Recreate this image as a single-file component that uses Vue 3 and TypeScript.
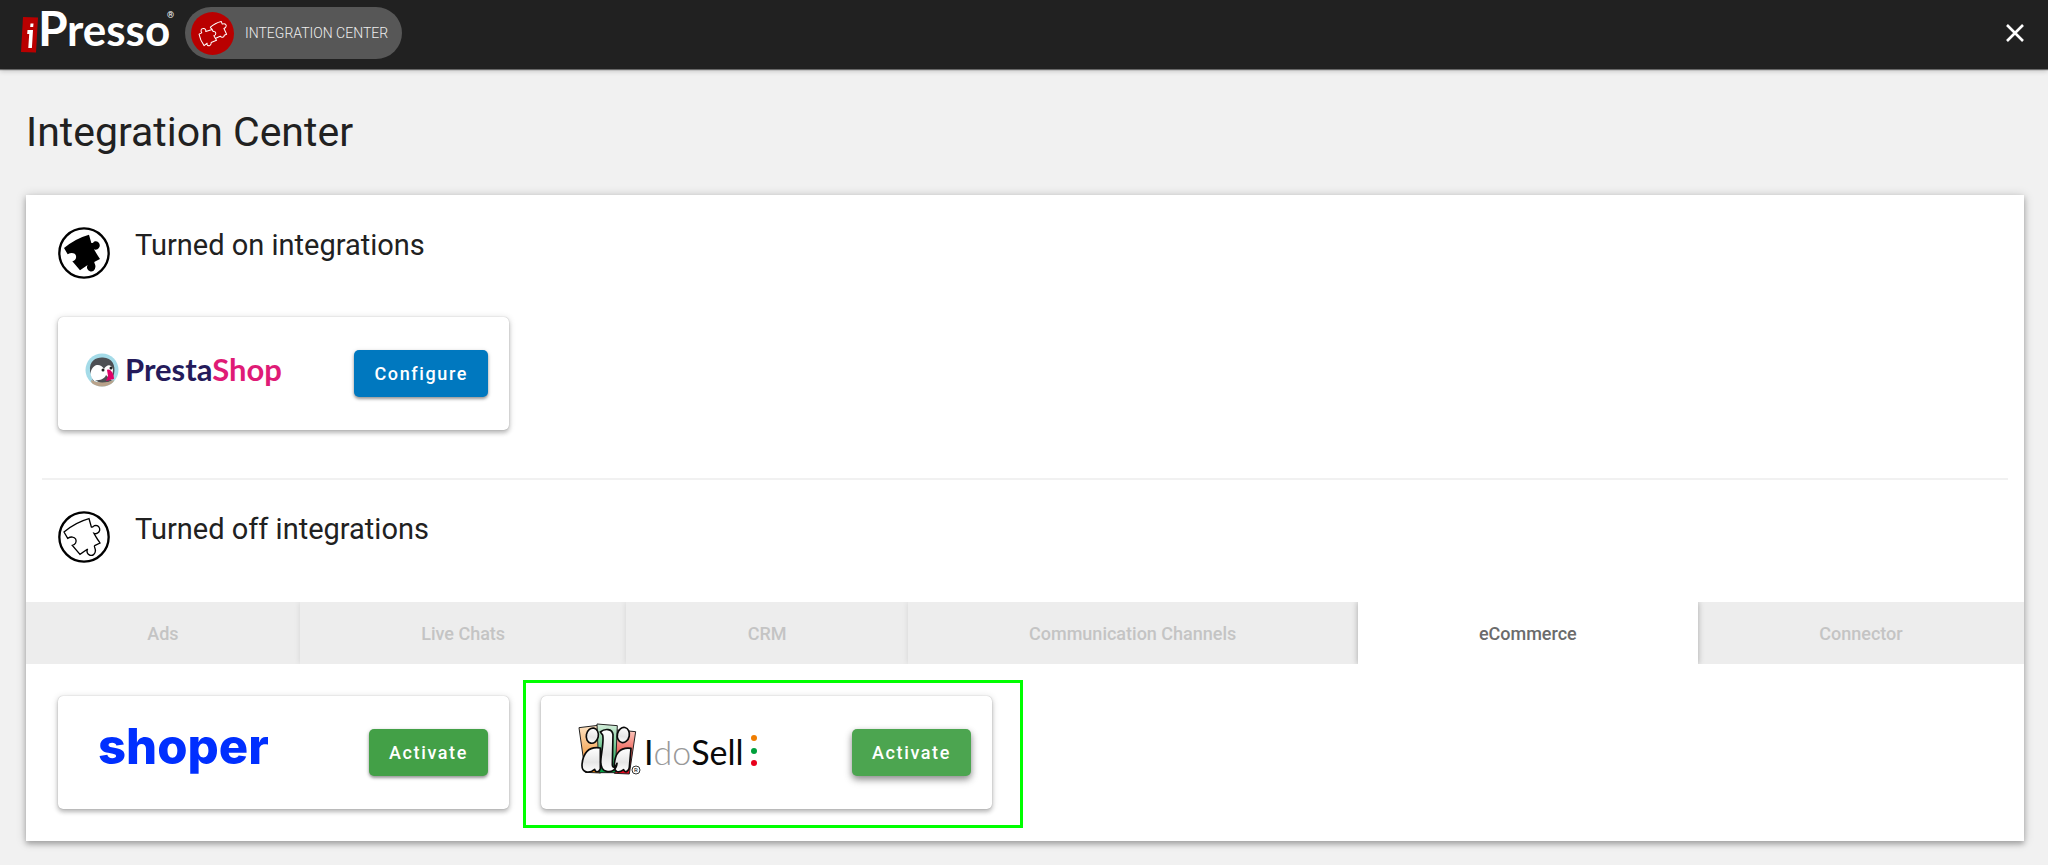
<script setup lang="ts">
import { ref } from 'vue'

const puzzle =
  'M42 97 Q77 68 117 57 L124 82 C132 84 128 77 138 77 A12.5 12.5 0 1 1 132 101 C137 111 144 121 150 130 L134 138 C130 140 138 146 136 155 A12.5 12.5 0 1 1 113 148 L90 164 L67 137 C76 135 81 127 77 118 C73 111 63 110 53 116 Z'

const tabs: string[] = ['Ads', 'Live Chats', 'CRM', 'Communication Channels', 'eCommerce', 'Connector']
const activeTab = ref('eCommerce')
</script>

<template>
  <div class="page">
    <header class="topbar">
      <a class="brand" href="#" aria-label="iPresso">
        <svg width="160" height="66" viewBox="0 0 160 66">
          <path d="M2 17 L17 17.500 L15 52.500 L0 52 Z" fill="#b90000" />
          <path d="M9.500 23.500 h3 l-.3 3.500 h-3 Z M6.500 30 h5.500 l-1.100 18 h-3.600 l.9 -14 h-2 Z" fill="#fff" />
          <text x="17" y="46" class="brand-p">P</text>
          <text x="46" y="46" class="brand-rest">resso</text>
          <text x="146" y="18" class="brand-mark">®</text>
        </svg>
      </a>
      <a class="pill" href="#">
        <svg class="pill-icon" width="43" height="43" viewBox="574 34 128 128">
          <circle cx="638" cy="98" r="64" fill="#b90000" />
          <g fill="none" stroke="#fff" stroke-width="3" stroke-linejoin="round">
            <path d="M598 100 L606 96 C602 90 604 83 610 83 C616 82 619 87 618 92 L637 86 L640 92 C650 90 650 103 642 105 L650 118 L634 125 C635 132 628 137 623 133 C621 131 621 129 622 127 L613 134 Q601 118 598 100 Z" />
            <path d="M631 80 Q646 66 664 62 L667 70 C676 66 682 73 677 80 L672 83 L680 100 L673 103 C673 110 665 111 661 106 L646 113 M631 80 L637 86" />
          </g>
        </svg>
        <span>INTEGRATION CENTER</span>
      </a>
      <button class="close" type="button" aria-label="Close">
        <svg width="20" height="20" viewBox="0 0 20 20">
          <path d="M2 2 L18 18 M18 2 L2 18" stroke="#fff" stroke-width="2.600" />
        </svg>
      </button>
    </header>

    <main class="content">
      <h1>Integration Center</h1>

      <div class="panel">
        <section class="group">
          <div class="group-head">
            <svg width="52" height="52" viewBox="24 34 156 156">
              <circle cx="102" cy="112" r="74" fill="#fff" stroke="#000" stroke-width="7" />
              <path :d="puzzle" fill="#000" />
            </svg>
            <h2>Turned on integrations</h2>
          </div>
          <div class="cards">
            <article class="card">
              <svg class="logo" width="240" height="64" viewBox="0 0 240 64" role="img" aria-label="PrestaShop">
                <defs>
                  <clipPath id="badge"><circle cx="28" cy="28" r="16.500" /></clipPath>
                </defs>
                <g transform="translate(0 4)">
                  <g clip-path="url(#badge)">
                    <rect x="11" y="11" width="34" height="34" fill="#a4dbe8" />
                    <path d="M16 29 C15 18 23 15 29 15.500 C38 16 42 23 40 32 L37 39 H19 Z" fill="#4d4f53" />
                    <path d="M17 29 C20 21 27 22 30 27 C33 22 37 22 39 27 L38 38 L30 41 L20 39 C17 36 16 32 17 29 Z" fill="#fff" />
                    <path d="M21 38 C27 39 31 36 32 33 L38 39 L28 42 Z" fill="#4d4f53" />
                    <path d="M33 28 C36 26 40 31 40 37 L32 39 L34 34 Z" fill="#df0067" />
                    <circle cx="29" cy="28" r="1.500" fill="#222" />
                    <circle cx="37" cy="26" r="1.500" fill="#222" />
                    <path d="M17 38 Q28 43 40 38 L38 45 H18 Z" fill="#b9a28a" />
                  </g>
                </g>
                <text x="51" y="43" class="presta"><tspan fill="#251b5b">Presta</tspan><tspan fill="#df1b76">Shop</tspan></text>
              </svg>
              <button class="btn configure" type="button">Configure</button>
            </article>
          </div>
        </section>

        <hr />

        <section class="group off">
          <div class="group-head">
            <svg width="52" height="52" viewBox="24 34 156 156">
              <circle cx="102" cy="112" r="74" fill="#fff" stroke="#000" stroke-width="7" />
              <path :d="puzzle" fill="none" stroke="#000" stroke-width="4" />
            </svg>
            <h2>Turned off integrations</h2>
          </div>
        </section>

        <div class="tabs" role="tablist">
          <button
            v-for="tab in tabs"
            :key="tab"
            type="button"
            role="tab"
            :class="['tab', { active: tab === activeTab }]"
            :aria-selected="tab === activeTab"
            @click="activeTab = tab"
          >
            {{ tab }}
          </button>
        </div>

        <div class="cards shop-cards">
          <article class="card">
            <svg class="logo" width="240" height="64" viewBox="0 0 240 64" role="img" aria-label="shoper">
              <text x="24" y="47" class="shoper">shoper</text>
            </svg>
            <button class="btn activate" type="button">Activate</button>
          </article>
          <article class="card marked">
            <svg class="logo" width="240" height="64" viewBox="0 0 240 64" role="img" aria-label="IdoSell">
              <defs>
                <linearGradient id="orange" x2="0" y2="1"><stop stop-color="#fde3c4" /><stop offset=".6" stop-color="#f6a95a" /><stop offset="1" stop-color="#ee7f00" /></linearGradient>
                <linearGradient id="green" x2="0" y2="1"><stop stop-color="#d5eedb" /><stop offset="1" stop-color="#009a3e" /></linearGradient>
                <linearGradient id="red" x2="0" y2="1"><stop stop-color="#fbc9bf" /><stop offset=".5" stop-color="#f0645a" /><stop offset="1" stop-color="#e2001a" /></linearGradient>
                <linearGradient id="silver" x2="0" y2="1"><stop stop-color="#fff" /><stop offset=".6" stop-color="#e6e6e6" /><stop offset="1" stop-color="#fff" /></linearGradient>
              </defs>
              <g transform="translate(3 -7) scale(.3333)">
                <g stroke="#222" stroke-width="3">
                  <path d="M57 53 L114 46 L122 189 L76 187 Z" fill="url(#orange)" />
                  <path d="M170 60 L227 65 L208 192 L163 190 Z" fill="url(#red)" />
                  <path d="M111 42 L172 47 L166 188 L117 188 Z" fill="url(#green)" />
                </g>
                <g fill="url(#silver)" stroke="#0a0a0a" stroke-width="5" stroke-linejoin="round">
                  <path d="M121 114 C84 108 68 132 66 165 C65 189 88 192 104 178 C106 188 117 188 121 176 Z" />
                  <path d="M213 115 C178 110 165 133 163 163 C160 188 176 190 191 179 C195 190 207 184 208 172 Z" />
                  <path d="M121 66 C134 55 157 55 159 74 L157 165 C158 176 167 171 171 160 C169 179 156 187 140 184 C122 181 121 163 123 145 C126 119 132 89 128 75 Z" />
                  <ellipse cx="97" cy="77" rx="18" ry="23" transform="rotate(12 97 77)" />
                  <ellipse cx="190" cy="75" rx="18" ry="23" transform="rotate(12 190 75)" />
                </g>
              </g>
              <circle cx="79" cy="53" r="4" fill="#fff" stroke="#333" stroke-width="1" />
              <text x="77" y="55" class="ido-mark">R</text>
              <text x="87" y="48" class="ido"><tspan>I</tspan><tspan class="ido-light">do</tspan><tspan>Sell</tspan></text>
              <circle cx="197" cy="21" r="3" fill="#f07d00" />
              <circle cx="197" cy="34" r="3" fill="#00a03c" />
              <circle cx="197" cy="46" r="3" fill="#e8001b" />
            </svg>
            <button class="btn activate hovered" type="button">Activate</button>
          </article>
        </div>
      </div>
    </main>
  </div>
</template>

<style>
body {
  margin: 0;
  background: #f1f1f1;
}
</style>

<style scoped>
.page {
  font-family: Roboto, "Liberation Sans", sans-serif;
  color: #212121;
}
.topbar {
  display: flex;
  align-items: center;
  box-sizing: border-box;
  height: 69px;
  padding: 0 22px 3px 21px;
  background: #212121;
  box-shadow: 0 1px 1px rgba(0, 0, 0, 0.5), 0 2px 5px rgba(0, 0, 0, 0.2);
}
.brand {
  display: flex;
  margin-right: 4px;
}
.brand svg,
.logo {
  overflow: visible;
}
.brand-p,
.brand-rest {
  font-family: Lato, sans-serif;
  font-weight: 700;
  font-size: 48px;
  fill: #fff;
}
.brand-rest {
  font-size: 44px;
}
.brand-mark {
  font-size: 9px;
  fill: #fff;
}
.pill {
  display: flex;
  align-items: center;
  gap: 11px;
  box-sizing: border-box;
  height: 52px;
  padding: 0 14px 0 6px;
  border-radius: 26px;
  background: #575757;
  color: #eee;
  font-size: 14px;
  font-weight: 300;
  text-decoration: none;
}
.close {
  display: flex;
  margin-left: auto;
  padding: 1px;
  border: 0;
  background: none;
  cursor: pointer;
}
.content {
  padding: 0 24px 24px 26px;
}
h1 {
  margin: 0;
  padding: 35px 0;
  font-size: 41px;
  line-height: 56px;
  font-weight: 400;
}
.panel {
  background: #fff;
  box-shadow: 0 3px 5px rgba(0, 0, 0, 0.24), 0 1px 10px rgba(0, 0, 0, 0.2);
}
.group {
  padding: 32px 32px 48px;
}
.group.off {
  padding: 31px 32px 39px;
}
.group-head {
  display: flex;
  align-items: flex-start;
  gap: 25px;
}
h2 {
  margin: 0;
  font-size: 29px;
  line-height: 36px;
  font-weight: 400;
}
.cards {
  display: flex;
  flex-wrap: wrap;
  gap: 32px;
  padding-top: 38px;
}
.shop-cards {
  padding: 32px;
}
.card {
  position: relative;
  display: flex;
  align-items: center;
  justify-content: space-between;
  box-sizing: border-box;
  width: 451px;
  height: 113px;
  padding: 0 21px 0 16px;
  border-radius: 5px;
  background: #fff;
  box-shadow: 0 0 1px rgba(0, 0, 0, 0.3), 0 3px 4px rgba(0, 0, 0, 0.2), 0 1px 7px rgba(0, 0, 0, 0.16);
}
.card.marked::after {
  content: "";
  position: absolute;
  inset: -16px -31px -19px -18px;
  border: 3px solid #00ff00;
  pointer-events: none;
}
.logo {
  margin-bottom: 8px;
}
.presta {
  font-family: Lato, sans-serif;
  font-weight: 700;
  font-size: 31px;
}
.shoper {
  font-family: Inter, sans-serif;
  font-weight: 800;
  font-size: 49px;
  fill: #002fff;
}
.ido {
  font-family: Lato, sans-serif;
  font-size: 34px;
  fill: #0a0a0a;
}
.ido-light {
  font-weight: 300;
  fill: #999;
}
.ido-mark {
  font-size: 6px;
}
.btn {
  height: 47px;
  padding: 0 20px;
  border: 0;
  border-radius: 5px;
  color: #fff;
  font-family: inherit;
  font-size: 18px;
  font-weight: 500;
  letter-spacing: 0.09em;
  cursor: pointer;
  box-shadow: 0 2px 3px rgba(0, 0, 0, 0.34), 0 1px 5px rgba(0, 0, 0, 0.14);
}
.configure {
  background: #0078bf;
}
.activate {
  background: #43a047;
}
.hovered {
  background: #4ca550;
  box-shadow: 0 3px 6px rgba(0, 0, 0, 0.34), 0 4px 10px rgba(0, 0, 0, 0.18);
}
hr {
  height: 2px;
  margin: 0 16px;
  border: 0;
  background: #f1f1f1;
}
.tabs {
  display: flex;
  overflow: hidden;
  background: #ededed;
}
.tab {
  flex: 1 1 auto;
  height: 62px;
  padding: 0;
  border: 0;
  background: #ededed;
  box-shadow: 0 0 6px rgba(0, 0, 0, 0.1);
  color: #c4c4c4;
  font-family: inherit;
  font-size: 18px;
  font-weight: 500;
  cursor: pointer;
}
.tab.active {
  position: relative;
  z-index: 1;
  background: #fff;
  color: #6b6b6b;
  box-shadow: 0 0 6px rgba(0, 0, 0, 0.3);
}
</style>
